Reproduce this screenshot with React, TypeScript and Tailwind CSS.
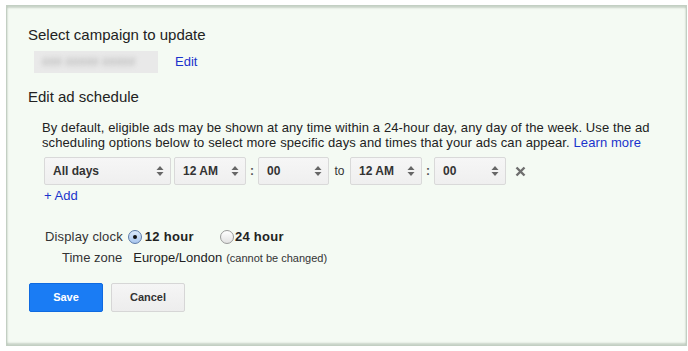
const font = { fontFamily: '"Liberation Sans", Arial, sans-serif' };

const Arrows = () => (
    <svg width="8" height="12" viewBox="0 0 8 12" className="shrink-0">
        <path d="M4 1 L7.5 5 H0.5 Z" fill="#666" />
        <path d="M4 11 L7.5 7 H0.5 Z" fill="#666" />
    </svg>
);

const Select = ({ label, width }: { label: string; width: string }) => (
    <div
        className={`${width} h-[28px] flex items-center justify-between pl-[8px] pr-[6px] rounded-[2px] border border-[#d9d9d9] bg-gradient-to-b from-[#f6f6f6] to-[#efefef] text-[12px] font-bold text-[#333]`}
    >
        <span>{label}</span>
        <Arrows />
    </div>
);

const Radio = ({ checked }: { checked?: boolean }) => (
    <span
        className={`w-[14px] h-[14px] rounded-full border flex items-center justify-center ${
            checked
                ? "border-[#5c7ba8] bg-gradient-to-b from-[#dbe9fa] to-[#a9c6ee]"
                : "border-[#9a9a9a] bg-gradient-to-b from-[#ffffff] to-[#e2e2e2]"
        }`}
    >
        {checked && <span className="w-[4px] h-[4px] rounded-full bg-[#111]" />}
    </span>
);

export default function App() {
    return (
        <div className="w-[688px] h-[351px] bg-white pt-[5px] pl-[6px] overflow-hidden text-[#222]" style={font}>
            <div className="w-[681px] h-[341px] bg-[#f4faf3] border border-[#c3cfc3] shadow-[inset_0_2px_2px_rgba(120,140,120,0.35),inset_0_-2px_2px_rgba(120,140,120,0.35)] pl-[21px] pt-[20px]">
                <div className="text-[15px] leading-[18px]">Select campaign to update</div>
                <div className="flex items-center mt-[7px] ml-[6px]">
                    <div className="w-[124px] h-[22px] bg-[#e9e9e9] flex items-center pl-[8px]">
                        <span className="text-[12px] text-[#aaa] blur-[2.5px]">### ##### #####</span>
                    </div>
                    <a className="ml-[17px] text-[13px] text-[#1a33cc]">Edit</a>
                </div>
                <div className="text-[15px] leading-[18px] mt-[15px]">Edit ad schedule</div>
                <div className="ml-[14px] mt-[14px] text-[13px] leading-[15px] w-[625px] tracking-[0.1px]">
                    By default, eligible ads may be shown at any time within a 24-hour day, any day of the week. Use the ad
                    scheduling options below to select more specific days and times that your ads can appear.{" "}
                    <a className="text-[#1a33cc]">Learn more</a>
                </div>
                <div className="flex items-center ml-[16px] mt-[7px] text-[12px]">
                    <Select label="All days" width="w-[127px]" />
                    <div className="ml-[3px]">
                        <Select label="12 AM" width="w-[72px]" />
                    </div>
                    <span className="w-[12px] text-center font-bold text-[#555]">:</span>
                    <Select label="00" width="w-[71px]" />
                    <span className="w-[21px] text-center text-[#333]">to</span>
                    <Select label="12 AM" width="w-[72px]" />
                    <span className="w-[12px] text-center font-bold text-[#555]">:</span>
                    <Select label="00" width="w-[72px]" />
                    <svg width="11" height="11" viewBox="0 0 11 11" className="ml-[9px]">
                        <path d="M1.5 1.5 L9.5 9.5 M9.5 1.5 L1.5 9.5" stroke="#6e6e6e" strokeWidth="2.4" />
                    </svg>
                </div>
                <a className="block ml-[16px] mt-[3px] text-[13px] leading-[16px] text-[#1a33cc]">+ Add</a>
                <div className="flex items-center ml-[17px] mt-[25px] text-[13px] leading-[16px]">
                    <span className="text-[#333] tracking-[0.15px]">Display clock</span>
                    <span className="ml-[5px]"><Radio checked /></span>
                    <span className="ml-[3px] font-bold tracking-[0.3px]">12 hour</span>
                    <span className="ml-[26px]"><Radio /></span>
                    <span className="ml-[1px] font-bold tracking-[0.3px]">24 hour</span>
                </div>
                <div className="flex items-baseline ml-[34px] mt-[5px] text-[13px] leading-[16px]">
                    <span className="text-[#333]">Time zone</span>
                    <span className="ml-[11px]">Europe/London</span>
                    <span className="ml-[4px] text-[11px] text-[#333]">(cannot be changed)</span>
                </div>
                <div className="flex mt-[17px] ml-[1px] gap-[8px]">
                    <button className="w-[74px] h-[29px] rounded-[2px] bg-[#1a7cf4] border border-[#0f6ae0] text-white text-[11px] font-bold">
                        Save
                    </button>
                    <button className="w-[74px] h-[29px] rounded-[2px] bg-gradient-to-b from-[#f5f5f5] to-[#ededed] border border-[#d6d6d6] text-[#333] text-[11px] font-bold">
                        Cancel
                    </button>
                </div>
            </div>
        </div>
    );
}
